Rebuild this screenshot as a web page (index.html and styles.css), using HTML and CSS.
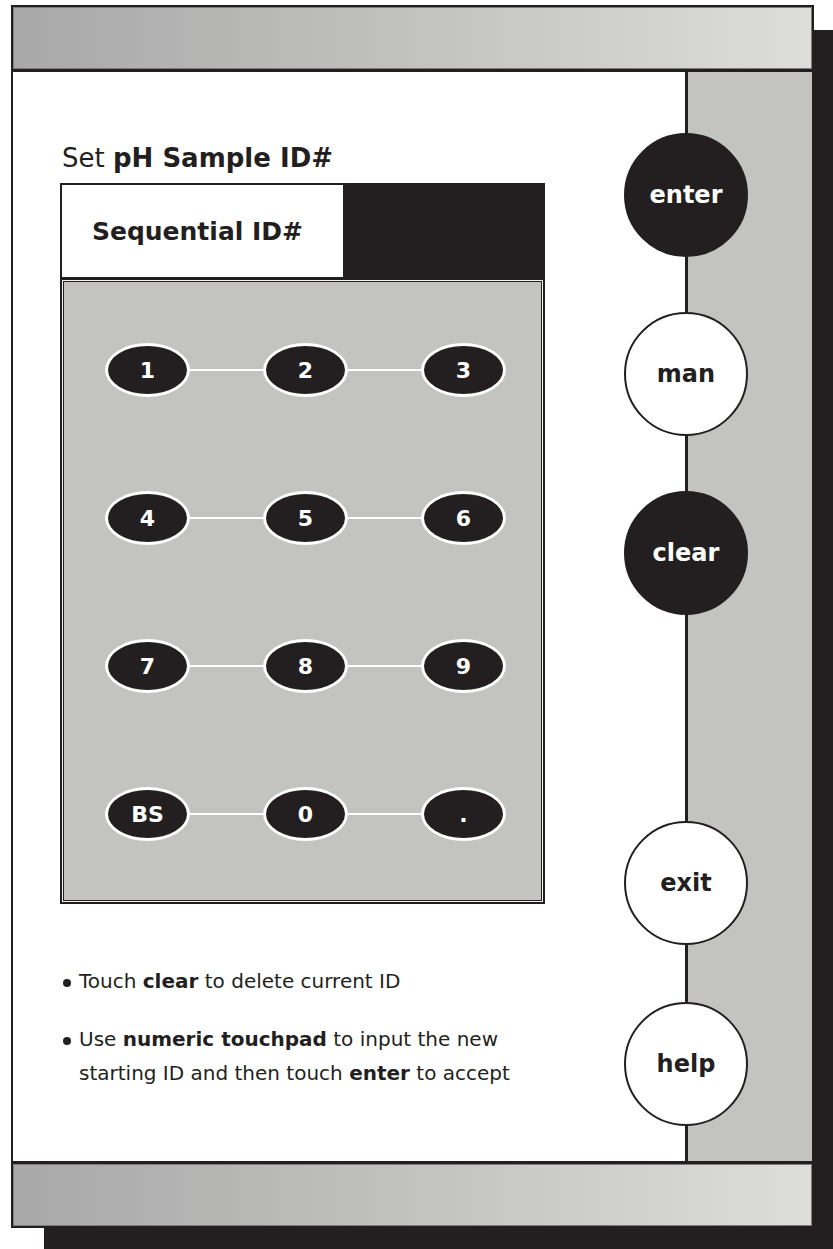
FILE: index.html
```html
<!DOCTYPE html>
<html lang="en">
<head>
    <meta charset="UTF-8">
    <meta name="viewport" content="width=device-width, initial-scale=1.0">
    <title>Set pH Sample ID#</title>
    <link rel="stylesheet" href="styles.css">
</head>
<body>
    <div class="screen">
        <div class="bar bar-top"></div>

        <div class="body">
            <div class="main">
                <h1 class="title">Set <b>pH Sample ID#</b></h1>

                <div class="panel">
                    <div class="panel-head">
                        <div class="mode">Sequential ID#</div>
                        <div class="readout"></div>
                    </div>

                    <div class="keypad">
                        <div class="key-row">
                            <span class="key">1</span><span class="wire"></span>
                            <span class="key">2</span><span class="wire"></span>
                            <span class="key">3</span>
                        </div>
                        <div class="key-row">
                            <span class="key">4</span><span class="wire"></span>
                            <span class="key">5</span><span class="wire"></span>
                            <span class="key">6</span>
                        </div>
                        <div class="key-row">
                            <span class="key">7</span><span class="wire"></span>
                            <span class="key">8</span><span class="wire"></span>
                            <span class="key">9</span>
                        </div>
                        <div class="key-row">
                            <span class="key">BS</span><span class="wire"></span>
                            <span class="key">0</span><span class="wire"></span>
                            <span class="key">.</span>
                        </div>
                    </div>
                </div>

                <ul class="notes">
                    <li>Touch <b>clear</b> to delete current ID</li>
                    <li>Use <b>numeric touchpad</b> to input the new starting ID and then touch <b>enter</b> to accept</li>
                </ul>
            </div>

            <!-- soft keys down the right edge -->
            <div class="rail">
                <div class="soft dark btn-enter">enter</div>
                <div class="soft btn-man">man</div>
                <div class="soft dark btn-clear">clear</div>
                <div class="soft btn-exit">exit</div>
                <div class="soft btn-help">help</div>
            </div>
        </div>

        <div class="bar bar-bottom"></div>
    </div>
</body>
</html>
```

FILE: styles.css
```css
/* pH meter screen mock-up */
html {
    margin: 0;
}
body {
    margin: 0;
    padding: 5px 0 0 11px;
    min-height: 100vh;
    box-sizing: border-box;
    background-color: white;
    font-family: "DejaVu Sans", Arial, sans-serif;
    color: #231f20;
}
.screen {
    width: 799px;
    border: 2px solid #231f20;
    background-color: white;
    box-shadow: 33px 25px 0 #231f20;
}
.bar {
    height: 62px;
    background: linear-gradient(to right, #a8a8a8, #bfbfbe 45%, #dddddc);
    box-shadow: inset 0 0 0 1px #7d7b7b;
}
.bar-top {
    border-bottom: 3px solid #231f20;
}
.bar-bottom {
    border-top: 3px solid #231f20;
}
.body {
    display: flex;
    height: 1089px;
}
.main {
    flex: 1;
    padding-left: 47px;
    padding-top: 1px;
}
.title {
    margin: 70px 0 10px 2px;
    font-size: 26px;
    line-height: 30px;
    font-weight: normal;
}
.title b {
    font-weight: bold;
}
.panel {
    width: 481px;
    border: 2px solid #231f20;
}
.panel-head {
    display: flex;
    height: 92px;
    border-bottom: 3px solid #231f20;
}
.mode {
    width: 281px;
    padding-right: 10px;
    box-sizing: border-box;
    display: flex;
    align-items: center;
    justify-content: center;
    font-size: 25px;
    font-weight: bold;
}
.readout {
    flex: 1;
    background-color: #231f20;
}
.keypad {
    height: 622px;
    padding: 63px 37px 0 43px;
    box-sizing: border-box;
    background-color: #c3c3c1;
    box-shadow: inset 0 0 0 1px #f2f2f2, inset 0 0 0 2px #231f20;
    display: flex;
    flex-direction: column;
    gap: 94px;
}
.key-row {
    display: flex;
    align-items: center;
}
.key {
    width: 85px;
    height: 54px;
    box-sizing: border-box;
    border: 3px solid white;
    border-radius: 50%;
    background-color: #231f20;
    color: white;
    font-size: 22px;
    font-weight: bold;
    display: flex;
    align-items: center;
    justify-content: center;
}
.wire {
    flex: 1;
    height: 2px;
    background-color: white;
}
.notes {
    list-style: none;
    margin: 60px 0 0 2px;
    padding: 0;
    font-size: 20px;
    line-height: 34px;
}
.notes li {
    position: relative;
    padding-left: 17px;
    width: 450px;
    margin-bottom: 24px;
}
.notes li::before {
    content: "";
    position: absolute;
    left: 1px;
    top: 15px;
    width: 8px;
    height: 8px;
    border-radius: 50%;
    background-color: #231f20;
}
.rail {
    width: 124px;
    border-left: 3px solid #231f20;
    background-color: #c3c3c1;
    display: flex;
    flex-direction: column;
    padding-top: 61px;
}
.soft {
    width: 124px;
    height: 124px;
    margin-left: -64px;
    box-sizing: border-box;
    border: 2px solid #231f20;
    border-radius: 50%;
    background-color: white;
    display: flex;
    align-items: center;
    justify-content: center;
    font-size: 24px;
    font-weight: bold;
}
.soft.dark {
    background-color: #231f20;
    color: white;
}
.btn-man,
.btn-clear {
    margin-top: 55px;
}
.btn-exit {
    margin-top: 206px;
}
.btn-help {
    margin-top: 57px;
}
```
